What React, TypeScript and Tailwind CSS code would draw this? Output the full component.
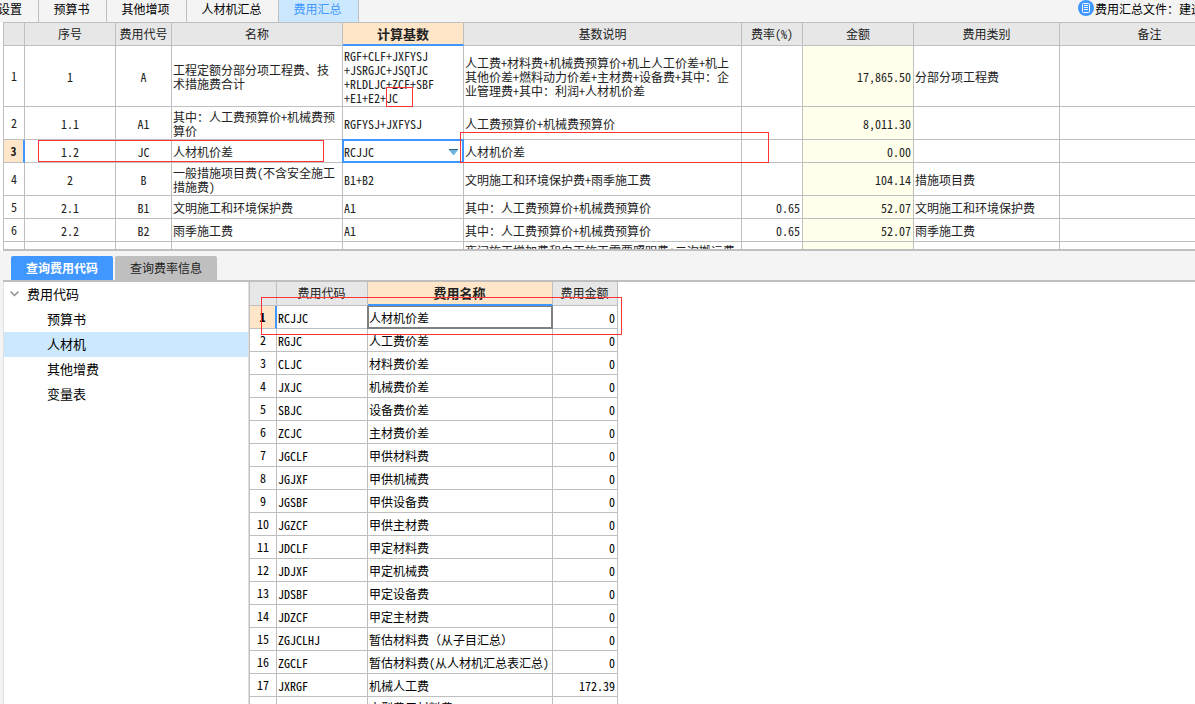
import React from "react";

const feeRows = [
  { h: "h-[61px]", no: "1", code: "A", name: "工程定额分部分项工程费、技\n术措施费合计", base: "RGF+CLF+JXFYSJ\n+JSRGJC+JSQTJC\n+RLDLJC+ZCF+SBF\n+E1+E2+JC", desc: "人工费+材料费+机械费预算价+机上人工价差+机上\n其他价差+燃料动力价差+主材费+设备费+其中：企\n业管理费+其中：利润+人材机价差", rate: "", amount: "17,865.50", type: "分部分项工程费" },
  { h: "h-[33px]", no: "1.1", code: "A1", name: "其中：人工费预算价+机械费预\n算价", base: "RGFYSJ+JXFYSJ", desc: "人工费预算价+机械费预算价", rate: "", amount: "8,011.30", type: "" },
  { h: "h-[23px]", no: "1.2", code: "JC", name: "人材机价差", base: "RCJJC", desc: "人材机价差", rate: "", amount: "0.00", type: "", active: true },
  { h: "h-[33px]", no: "2", code: "B", name: "一般措施项目费(不含安全施工\n措施费)", base: "B1+B2", desc: "文明施工和环境保护费+雨季施工费", rate: "", amount: "104.14", type: "措施项目费" },
  { h: "h-[23px]", no: "2.1", code: "B1", name: "文明施工和环境保护费", base: "A1", desc: "其中：人工费预算价+机械费预算价", rate: "0.65", amount: "52.07", type: "文明施工和环境保护费" },
  { h: "h-[23px]", no: "2.2", code: "B2", name: "雨季施工费", base: "A1", desc: "其中：人工费预算价+机械费预算价", rate: "0.65", amount: "52.07", type: "雨季施工费" },
];

const codeRows = [
  ["RCJJC", "人材机价差", "0"],
  ["RGJC", "人工费价差", "0"],
  ["CLJC", "材料费价差", "0"],
  ["JXJC", "机械费价差", "0"],
  ["SBJC", "设备费价差", "0"],
  ["ZCJC", "主材费价差", "0"],
  ["JGCLF", "甲供材料费", "0"],
  ["JGJXF", "甲供机械费", "0"],
  ["JGSBF", "甲供设备费", "0"],
  ["JGZCF", "甲供主材费", "0"],
  ["JDCLF", "甲定材料费", "0"],
  ["JDJXF", "甲定机械费", "0"],
  ["JDSBF", "甲定设备费", "0"],
  ["JDZCF", "甲定主材费", "0"],
  ["ZGJCLHJ", "暂估材料费（从子目汇总）", "0"],
  ["ZGCLF", "暂估材料费(从人材机汇总表汇总)", "0"],
  ["JXRGF", "机械人工费", "172.39"],
];

const line = "border-r border-b border-[#bfbfbf] ";
const numCell = line + "p-0 text-center";
const activeNumCell = "border-r-2 border-b border-r-[#3f97ff] border-b-[#bfbfbf] bg-[#ffe6c8] p-0 text-center font-bold";
const midCell = line + "p-0 pt-0.5 text-center";
const textCell = line + "p-0 pt-0.5 pl-px";
const amountCell = line + "p-0 pt-0.5 pr-0.5 text-right";
const headCell = line + "bg-[#e7e7e7] p-0 font-normal";
const activeHead = "border-r border-b-2 border-r-[#bfbfbf] border-b-[#3f97ff] bg-[#ffe6c8] p-0 text-[13px] font-bold";

const TopTabs = () => {
  return (
    <nav className="flex h-[22px] shrink-0 justify-between overflow-hidden bg-[#f4f4f4] text-black">
      <div className="flex">
        <button className="flex w-[39px] items-center justify-end border-r border-[#bfbfbf] pr-4 pb-1 whitespace-nowrap">费用设置</button>
        <button className="w-[68px] border-r border-[#bfbfbf] pr-0.5 pb-1">预算书</button>
        <button className="w-20 border-r border-[#bfbfbf] pr-0.5 pb-1">其他增项</button>
        <button className="w-[92px] border-r border-[#bfbfbf] pr-0.5 pb-1">人材机汇总</button>
        <button className="w-20 border-r border-[#bfbfbf] bg-[#cce8ff] pr-0.5 pb-1 text-[#3f97ff]">费用汇总</button>
      </div>
      <div className="flex w-[117px] shrink-0 items-start gap-px overflow-hidden whitespace-nowrap">
        <svg className="size-4 shrink-0" viewBox="0 0 16 16" fill="none">
          <circle cx="8" cy="8" r="8" fill="#3f97ff" />
          <rect x="4.5" y="3.5" width="7" height="9" rx="1" stroke="#fff" />
          <path d="M6 5.5h4M6 7.5h4M6 9.5h4" stroke="#fff" />
        </svg>
        <span className="leading-[18px]">费用汇总文件：建造工程</span>
      </div>
    </nav>
  );
};

const FeeTable = () => {
  return (
    <div className="ml-[3px] h-[229px] shrink-0 overflow-hidden border-t border-b-2 border-l border-[#bfbfbf]">
      <table className="w-[1236px] table-fixed border-separate border-spacing-0 leading-[14px]">
        <colgroup>
          <col className="w-[21px]" />
          <col className="w-[91px]" />
          <col className="w-14" />
          <col className="w-[171px]" />
          <col className="w-[121px]" />
          <col className="w-[278px]" />
          <col className="w-[61px]" />
          <col className="w-[111px]" />
          <col className="w-[146px]" />
          <col />
        </colgroup>
        <thead>
          <tr className="h-[23px]">
            <th className={headCell}></th>
            <th className={headCell}>序号</th>
            <th className={headCell}>费用代号</th>
            <th className={headCell}>名称</th>
            <th className={activeHead}>计算基数</th>
            <th className={headCell}>基数说明</th>
            <th className={headCell}>费率(%)</th>
            <th className={headCell}>金额</th>
            <th className={headCell}>费用类别</th>
            <th className={headCell}>备注</th>
          </tr>
        </thead>
        <tbody className="whitespace-pre">
          {feeRows.map((row, i) => (
            <tr key={row.no} className={row.h}>
              <td className={row.active ? activeNumCell : numCell}>{i + 1}</td>
              <td className={midCell}>{row.no}</td>
              <td className={midCell}>{row.code}</td>
              <td className={textCell}>{row.name}</td>
              {row.active ? (
                <td className={textCell + " relative"}>
                  <div className="absolute -top-px right-[-1px] bottom-[-1px] -left-px flex border-2 border-[#3f97ff]">
                    <select aria-label="计算基数" className="w-full appearance-none pt-0.5">
                      <option>{row.base}</option>
                    </select>
                    <svg className="pointer-events-none absolute top-2 right-1 h-1.5 w-[9px]" viewBox="0 0 9 6">
                      <path d="M0 0h9v1L5 6H4L0 1z" fill="#6fb5dd" />
                      <path d="M0 0h9v1H0z" fill="#2c6482" />
                    </svg>
                  </div>
                </td>
              ) : (
                <td className={textCell}>{row.base}</td>
              )}
              <td className={textCell}>{row.desc}</td>
              <td className={amountCell}>{row.rate}</td>
              <td className={amountCell + " bg-[#ffffeb]"}>{row.amount}</td>
              <td className={textCell}>{row.type}</td>
              <td className={textCell}></td>
            </tr>
          ))}
          <tr className="h-[33px] align-top">
            <td className={numCell}></td>
            <td className={midCell}></td>
            <td className={midCell}></td>
            <td className={textCell}></td>
            <td className={textCell}></td>
            <td className={textCell}>夜间施工增加费和白天施工需要照明费+二次搬运费</td>
            <td className={amountCell}></td>
            <td className={amountCell + " bg-[#ffffeb]"}></td>
            <td className={textCell}></td>
            <td className={textCell}></td>
          </tr>
        </tbody>
      </table>
    </div>
  );
};

const CodeTree = () => {
  return (
    <aside className="w-[246px] shrink-0 border-x border-[#e0e0e0] bg-white text-[13px] text-black">
      <button className="flex h-[25px] w-full items-center gap-2 pb-0.5 pl-1.5">
        <svg className="h-1.5 w-[9px]" viewBox="0 0 9 6" fill="none">
          <path d="M0.5 0.5l4 4 4-4" stroke="#909090" strokeWidth="1.5" />
        </svg>
        费用代码
      </button>
      <button className="block h-[25px] w-full pb-0.5 pl-[43px] text-left">预算书</button>
      <button className="block h-[25px] w-full bg-[#cce8ff] pb-0.5 pl-[43px] text-left">人材机</button>
      <button className="block h-[25px] w-full pb-0.5 pl-[43px] text-left">其他增费</button>
      <button className="block h-[25px] w-full pb-0.5 pl-[43px] text-left">变量表</button>
    </aside>
  );
};

const CodeTable = () => {
  return (
    <table className="w-[369px] table-fixed border-separate border-spacing-0 self-start border-l border-[#bfbfbf] leading-[14px] whitespace-nowrap text-black">
      <colgroup>
        <col className="w-[27px]" />
        <col className="w-[91px]" />
        <col className="w-[185px]" />
        <col className="w-[65px]" />
      </colgroup>
      <thead className="text-[#222]">
        <tr className="h-6">
          <th className={headCell}></th>
          <th className={headCell + " pr-px pb-0.5"}>费用代码</th>
          <th className={activeHead + " pr-px"}>费用名称</th>
          <th className={headCell + " pr-px pb-0.5"}>费用金额</th>
        </tr>
      </thead>
      <tbody>
        {codeRows.map(([code, name, amount], i) => (
          <tr key={code} className="h-[23px]">
            <td className={i === 0 ? activeNumCell : numCell}>{i + 1}</td>
            <td className={textCell}>{code}</td>
            <td className={textCell + (name.includes("（") ? " [font-feature-settings:normal]" : " relative")}>
              {name}
              {i === 0 && <span className="absolute top-0 right-[-1px] bottom-[-1px] -left-px border-2 border-t border-[#808080]"></span>}
            </td>
            <td className={amountCell}>{amount}</td>
          </tr>
        ))}
        <tr className="h-[23px]">
          <td className={numCell}></td>
          <td className={textCell}></td>
          <td className={line + "p-0 pl-px"}>大型费用材料费</td>
          <td className={amountCell}></td>
        </tr>
      </tbody>
    </table>
  );
};

const App = () => {
  return (
    <div
      lang="zh-CN"
      className="relative flex h-screen flex-col overflow-hidden bg-[#f4f4f4] font-['Noto_Sans_CJK_SC',sans-serif] text-xs text-[#222] [font-feature-settings:'hwid']"
    >
      <TopTabs />
      <div className="shrink-0 bg-white">
        <FeeTable />
      </div>

      <div className="ml-[3px] flex h-[31px] shrink-0 items-end gap-0.5 border-b-2 border-[#bfbfbf] pl-2">
        <button className="h-6 w-[102px] rounded-t-xs bg-[#3f97ff] font-bold text-white">查询费用代码</button>
        <button className="h-6 w-[102px] rounded-t-xs bg-[#bfbfbf]">查询费率信息</button>
      </div>

      <div className="ml-[3px] flex min-h-0 flex-1 overflow-hidden bg-white">
        <CodeTree />
        <CodeTable />
      </div>

      {/* review marks drawn over the sheet */}
      <div className="pointer-events-none absolute top-[87px] left-[386px] h-5 w-[27px] border border-[#f33]"></div>
      <div className="pointer-events-none absolute top-[140px] left-[38px] h-[22px] w-[286px] border border-[#f33]"></div>
      <div className="pointer-events-none absolute top-[132px] left-[460px] h-[31px] w-[309px] border border-[#f33]"></div>
      <div className="pointer-events-none absolute top-[297px] left-[261px] h-[38px] w-[361px] border border-[#f33]"></div>
    </div>
  );
};

export default App;
